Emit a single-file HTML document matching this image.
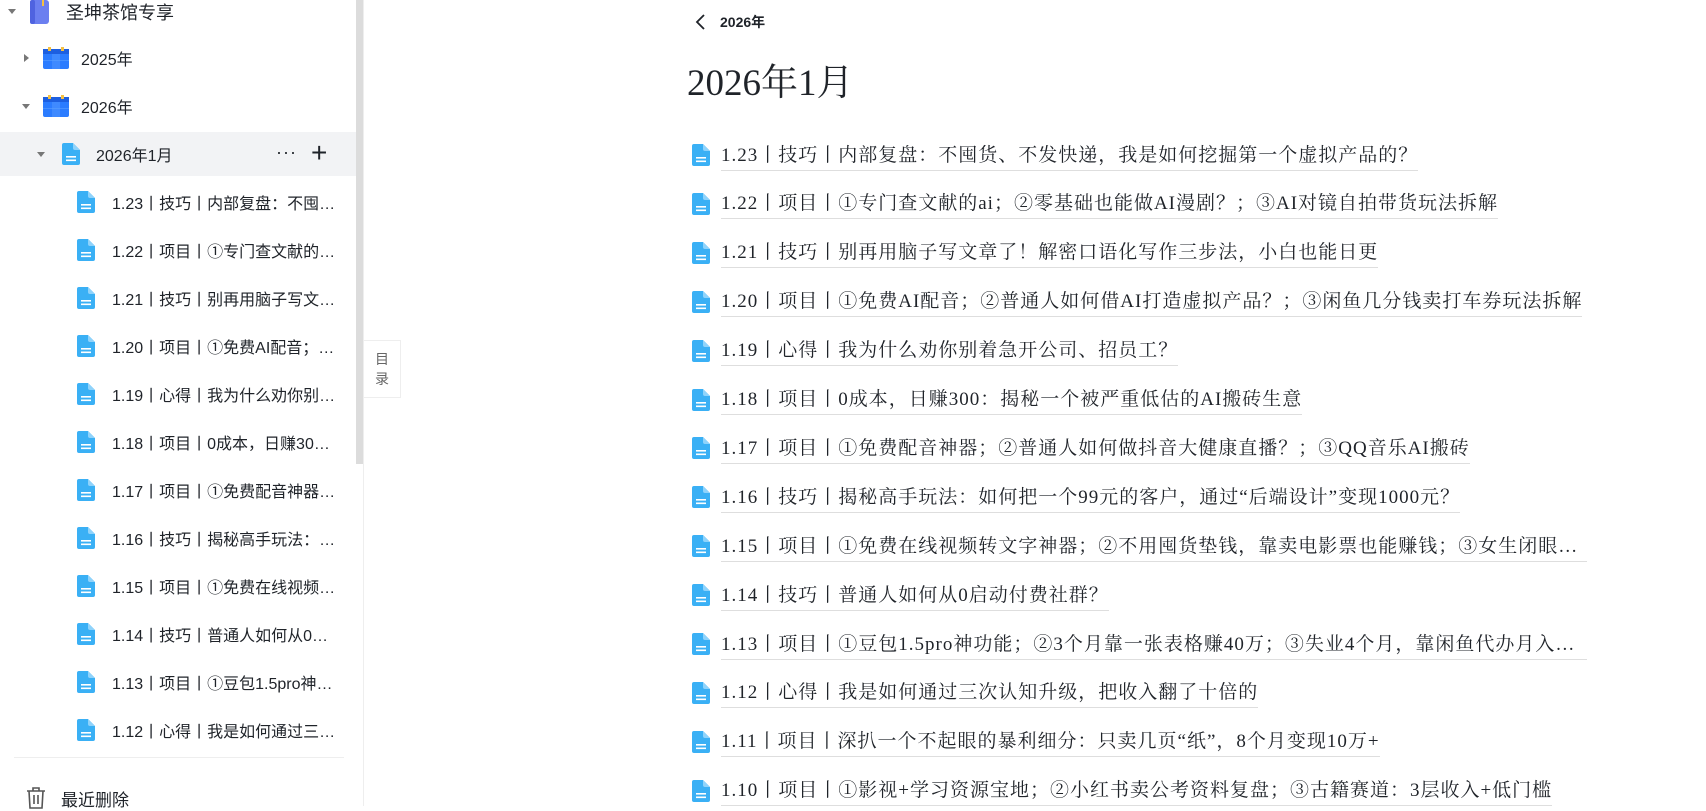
<!DOCTYPE html>
<html><head><meta charset="utf-8"><style>
*{margin:0;padding:0;box-sizing:border-box}
body{width:1706px;height:806px;overflow:hidden;background:#fff;position:relative;font-family:"Liberation Sans","Noto Sans CJK SC",sans-serif;color:#1f2329}
.sb{position:absolute;left:0;top:0;width:364px;height:806px;border-right:1px solid #eee;background:#fff}
.row{position:absolute;left:0;width:356px;height:44px;display:flex;align-items:center;font-size:16px;white-space:nowrap}
.tri{position:absolute;width:0;height:0}
.tri.d{border-left:4px solid transparent;border-right:4px solid transparent;border-top:5px solid #777}
.tri.r{border-top:4px solid transparent;border-bottom:4px solid transparent;border-left:5px solid #777}
.t{position:absolute;overflow:hidden;text-overflow:ellipsis}
.scroll{position:absolute;left:356px;top:0;width:7px;height:464px;background:#dcdcdc}
.tab{position:absolute;left:364px;top:340px;width:37px;height:58px;border:1px solid #eee;border-left:none;color:#666;font-size:14px;text-align:center;line-height:20px;padding-top:8px}
.list{position:absolute;left:692px;top:0}
.it{position:absolute;left:0;height:30px;display:flex;align-items:center;white-space:nowrap}
.it span{display:inline-block;font-family:"Liberation Serif","Noto Serif CJK SC",serif;font-size:19px;color:#1f2329;border-bottom:1px solid #dedede;padding-bottom:3px;margin-left:11px;max-width:866px;overflow:hidden;text-overflow:ellipsis;letter-spacing:1px}
</style></head><body>
<svg width="0" height="0" style="position:absolute"><defs>
<symbol id="doc" viewBox="0 0 18 22"><path d="M2 0h9l7 7v13a2 2 0 0 1-2 2H2a2 2 0 0 1-2-2V2a2 2 0 0 1 2-2z" fill="#3ab0f5"/><path d="M11 0l7 7h-5a2 2 0 0 1-2-2z" fill="#8fd3fb"/><rect x="4" y="13" width="10" height="1.6" fill="#fff"/><rect x="4" y="16.5" width="10" height="1.6" fill="#fff"/></symbol>
<symbol id="cal" viewBox="0 0 26 22"><rect x="0" y="2" width="26" height="20" rx="2" fill="#2b7cff"/><rect x="0" y="2" width="26" height="5" fill="#1d5fe0"/><rect x="5" y="0" width="3" height="4" fill="#f5c042"/><rect x="18" y="0" width="3" height="4" fill="#f5c042"/><rect x="9" y="7" width="8" height="15" fill="#4d94ff" opacity=".6"/><rect x="0" y="13" width="26" height="1" fill="#5aa0ff" opacity=".6"/></symbol>
</defs></svg>
<div class="sb">
 <div class="row" style="top:-11px"><div class="tri d" style="left:8px;top:20px"></div>
  <svg style="position:absolute;left:30px;top:11px" width="20" height="24" viewBox="0 0 20 24"><rect x="0" y="0" width="19" height="24" rx="3" fill="#6b7ff0"/><rect x="0" y="0" width="5" height="24" rx="2" fill="#4f63e0"/><rect x="12" y="0" width="2" height="6" fill="#f5c042"/></svg>
  <div class="t" style="left:66px;font-size:18px;top:10px">圣坤茶馆专享</div></div>
 <div class="row" style="top:36px"><div class="tri r" style="left:24px;top:18px"></div><svg style="position:absolute;left:43px;top:11px" width="26" height="22"><use href="#cal"/></svg><div class="t" style="left:81px">2025年</div></div>
 <div class="row" style="top:84px"><div class="tri d" style="left:22px;top:20px"></div><svg style="position:absolute;left:43px;top:11px" width="26" height="22"><use href="#cal"/></svg><div class="t" style="left:81px">2026年</div></div>
 <div class="row" style="top:132px;background:#f2f3f5"><div class="tri d" style="left:37px;top:20px"></div><svg style="position:absolute;left:62px;top:11px" width="18" height="22"><use href="#doc"/></svg><div class="t" style="left:96px">2026年1月</div>
  <div style="position:absolute;left:276px;top:10px;font-size:18px;letter-spacing:1px">···</div>
  <div style="position:absolute;left:311px;top:5px;font-size:28px;font-weight:300">+</div></div>
 <div id="kids"></div>
 <div class="scroll"></div>
 <div style="position:absolute;left:14px;top:757px;width:330px;height:1px;background:#eee"></div>
 <svg style="position:absolute;left:26px;top:787px" width="20" height="22" viewBox="0 0 20 22" fill="none" stroke="#555" stroke-width="1.6"><path d="M1 4h18M7 4V1h6v3M3 4l1 17h12l1-17M8 8v9M12 8v9"/></svg>
 <div style="position:absolute;left:61px;top:786px;font-size:17px">最近删除</div>
</div>
<div class="tab">目<br>录</div>
<svg style="position:absolute;left:695px;top:14px" width="12" height="16" viewBox="0 0 12 16"><path d="M9 1L2 8l7 7" fill="none" stroke="#1f2329" stroke-width="1.8"/></svg>
<div style="position:absolute;left:720px;top:12px;font-size:14px;font-weight:bold">2026年</div>
<div style="position:absolute;left:687px;top:52px;font-size:37px;font-family:'Liberation Serif','Noto Serif CJK SC',serif">2026年1月</div>
<div class="list" id="list"></div>
<script>
var items=["1.23丨技巧丨内部复盘：不囤货、不发快递，我是如何挖掘第一个虚拟产品的？","1.22丨项目丨①专门查文献的ai；②零基础也能做AI漫剧？；③AI对镜自拍带货玩法拆解","1.21丨技巧丨别再用脑子写文章了！解密口语化写作三步法，小白也能日更","1.20丨项目丨①免费AI配音；②普通人如何借AI打造虚拟产品？；③闲鱼几分钱卖打车券玩法拆解","1.19丨心得丨我为什么劝你别着急开公司、招员工？","1.18丨项目丨0成本，日赚300：揭秘一个被严重低估的AI搬砖生意","1.17丨项目丨①免费配音神器；②普通人如何做抖音大健康直播？；③QQ音乐AI搬砖","1.16丨技巧丨揭秘高手玩法：如何把一个99元的客户，通过“后端设计”变现1000元？","1.15丨项目丨①免费在线视频转文字神器；②不用囤货垫钱，靠卖电影票也能赚钱；③女生闭眼入的副业","1.14丨技巧丨普通人如何从0启动付费社群？","1.13丨项目丨①豆包1.5pro神功能；②3个月靠一张表格赚40万；③失业4个月，靠闲鱼代办月入过万","1.12丨心得丨我是如何通过三次认知升级，把收入翻了十倍的","1.11丨项目丨深扒一个不起眼的暴利细分：只卖几页“纸”，8个月变现10万+","1.10丨项目丨①影视+学习资源宝地；②小红书卖公考资料复盘；③古籍赛道：3层收入+低门槛"];
var h="",k="";
items.forEach(function(s,i){var y=140+i*48.9;
h+='<div class="it" style="top:'+y+'px"><svg width="18" height="22"><use href="#doc"/></svg><span>'+s+'</span></div>';
if(i<12){var sy=180+i*48;k+='<div class="row" style="top:'+sy+'px"><svg style="position:absolute;left:77px;top:11px" width="18" height="22"><use href="#doc"/></svg><div class="t" style="left:112px;width:224px">'+s+'</div></div>';}
});
document.getElementById("list").innerHTML=h;document.getElementById("kids").innerHTML=k;
</script>
</body></html>
